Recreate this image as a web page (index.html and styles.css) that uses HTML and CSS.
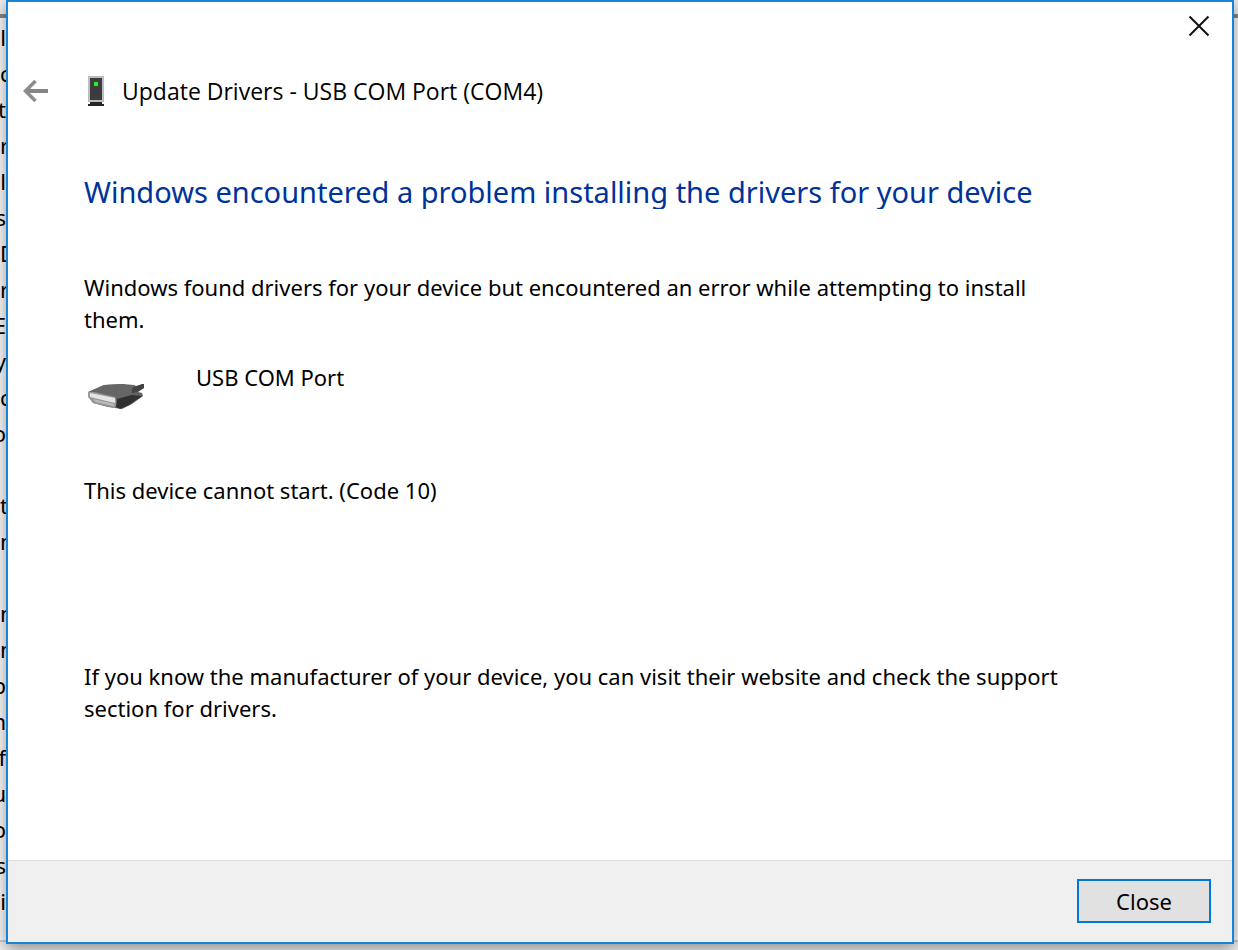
FILE: index.html
```
<!DOCTYPE html>
<html lang="en">
<head>
  <meta charset="UTF-8">
  <title>Update Drivers - USB COM Port (COM4)</title>
  <link rel="stylesheet" href="styles.css">
</head>
<body>

  <div class="backdrop" aria-hidden="true">
    <div class="backdrop-bar"></div>
    <div class="backdrop-text">
      <p class="end">l</p>
      <p>c</p>
      <p class="end">t</p>
      <p>r</p>
      <p class="end">sl</p>
      <p class="end">s</p>
      <p>D</p>
      <p>r</p>
      <p class="end">E</p>
      <p class="end">y</p>
      <p>c</p>
      <p class="end">o</p>
      <p></p>
      <p>t</p>
      <p>n</p>
      <p></p>
      <p>n</p>
      <p>n</p>
      <p class="end">p</p>
      <p class="end">n</p>
      <p class="end">f</p>
      <p class="end">u</p>
      <p class="end">o</p>
      <p class="end">s</p>
      <p class="end">i</p>
    </div>
    <div class="backdrop-status"></div>
  </div>

  <main class="dialog">
    <div class="titlebar">
      <button class="icon-button" aria-label="Close window">
        <svg width="22" height="22" viewBox="0 0 22 22">
          <path d="M1.5 1.5 20.5 20.5M20.5 1.5 1.5 20.5" fill="none" stroke="#111" stroke-width="2"/>
        </svg>
      </button>
    </div>

    <header class="header">
      <button class="icon-button" aria-label="Back">
        <svg width="26" height="24" viewBox="0 0 26 24">
          <path d="M25 12H3" fill="none" stroke="#858585" stroke-width="4"/>
          <path d="M12.500 2 2.500 12 12.500 22" fill="none" stroke="#8c8c8c" stroke-width="3.500"/>
        </svg>
      </button>
      <svg class="device-icon" width="16" height="30" viewBox="0 0 16 30">
        <path d="M0 0h16v26H0z" fill="#b9c0c5"/>
        <path d="M2 2h12v22H2z" fill="#3c3c3c"/>
        <path d="M6 6h4v4H6z" fill="#25f02b"/>
        <path d="M2 26h12v2h2v2H0v-2h2z" fill="#252525"/>
      </svg>
      <span class="title">Update Drivers - USB COM Port (COM4)</span>
    </header>

    <section class="content">
      <h1>Windows encountered a problem installing the drivers for your device</h1>
      <p>Windows found drivers for your device but encountered an error while attempting to install<br>them.</p>
      <div class="device">
        <svg width="60" height="30" viewBox="0 0 60 30">
          <path d="M4 11 20 4 38 3 50 4 52 5 60 3v4l-6 4 4 1 1 3-11 8-10 5-14-2-15-4-4-6z" fill="#626262"/>
          <path d="M5 11 20 4 38 3 52 6 49 12 35 18 20 15z" fill="#666"/>
          <path d="M4 11h6l21 5 2 5-2 6-22-5-5-6z" fill="#999"/>
          <path d="M6 12 31 17v5L6 16z" fill="#e4e4e8"/>
          <path d="M9 18 30 23v2L12 21z" fill="#bbb"/>
          <path d="M33 18 48 14 58 15 45 24 36 28 32 26z" fill="#303030"/>
          <path d="M48 7 58 3h2v4l-7 4-5 1z" fill="#444"/>
        </svg>
        <span>USB COM Port</span>
      </div>
      <p class="status">This device cannot start. (Code 10)</p>
      <p>If you know the manufacturer of your device, you can visit their website and check the support<br>section for drivers.</p>
    </section>

    <footer class="footer">
      <button class="close-button">Close</button>
    </footer>
  </main>

</body>
</html>
```
FILE: styles.css
```
:root {
  --accent: #1883d7;
  --heading: #003399;
  --line: #dfdfdf;
}

* {
  box-sizing: border-box;
}

body {
  margin: 0;
  min-height: 100vh;
  padding: 0 4px 6px 6px;
  display: flex;
  background: #fff;
  color: #000;
  font-family: "Noto Sans", "Open Sans", sans-serif;
  font-size: 22px;
  line-height: 32px;
}

p, h1 {
  margin: 0;
}

/* window behind the dialog */
.backdrop {
  position: absolute;
  inset: 0;
  display: flex;
  flex-direction: column;
  overflow: hidden;
}

.backdrop-bar {
  height: 18px;
  background: #f0f0f0;
  border-bottom: 4px solid #888;
}

.backdrop-text {
  flex: 1;
  width: 6px;
}

.backdrop-text p {
  height: 36px;
  line-height: 38px;
  display: flex;
  overflow: hidden;
}

.backdrop-text .end {
  justify-content: flex-end;
}

.backdrop-status {
  height: 10px;
  background: #f0f0f0;
  border-top: 2px solid #ccc;
}

.dialog {
  position: relative;
  flex: 1;
  display: flex;
  flex-direction: column;
  background: #fff;
  border: 2px solid var(--accent);
  box-shadow: 0 4px 16px rgba(0, 0, 0, 0.45);
}

.icon-button {
  display: flex;
  padding: 0;
  border: none;
  background: none;
}

.titlebar {
  display: flex;
  justify-content: flex-end;
  padding: 13px 22px 0 0;
}

.header {
  display: flex;
  align-items: center;
  padding: 38px 16px 0 15px;
}

.title {
  font-family: "Open Sans", "Noto Sans", sans-serif;
  font-size: 23px;
}

.device-icon {
  margin: 0 18px 0 39px;
}

.content {
  flex: 1;
  padding: 64px 76px 0;
}

h1 {
  height: 38px;
  margin-bottom: 62px;
  overflow: hidden;
  color: var(--heading);
  font-size: 29px;
  font-weight: 400;
  line-height: 42px;
}

.device {
  display: flex;
  gap: 52px;
  margin-top: 26px;
}

.device svg {
  margin-top: 20px;
}

.status {
  margin: 63px 0 154px;
}

.footer {
  display: flex;
  justify-content: flex-end;
  padding: 18px 21px 19px;
  background: #f0f0f0;
  border-top: 1px solid var(--line);
}

.close-button {
  width: 134px;
  height: 44px;
  border: 2px solid #0078d7;
  background: #e1e1e1;
  color: #000;
  font: inherit;
}
```
